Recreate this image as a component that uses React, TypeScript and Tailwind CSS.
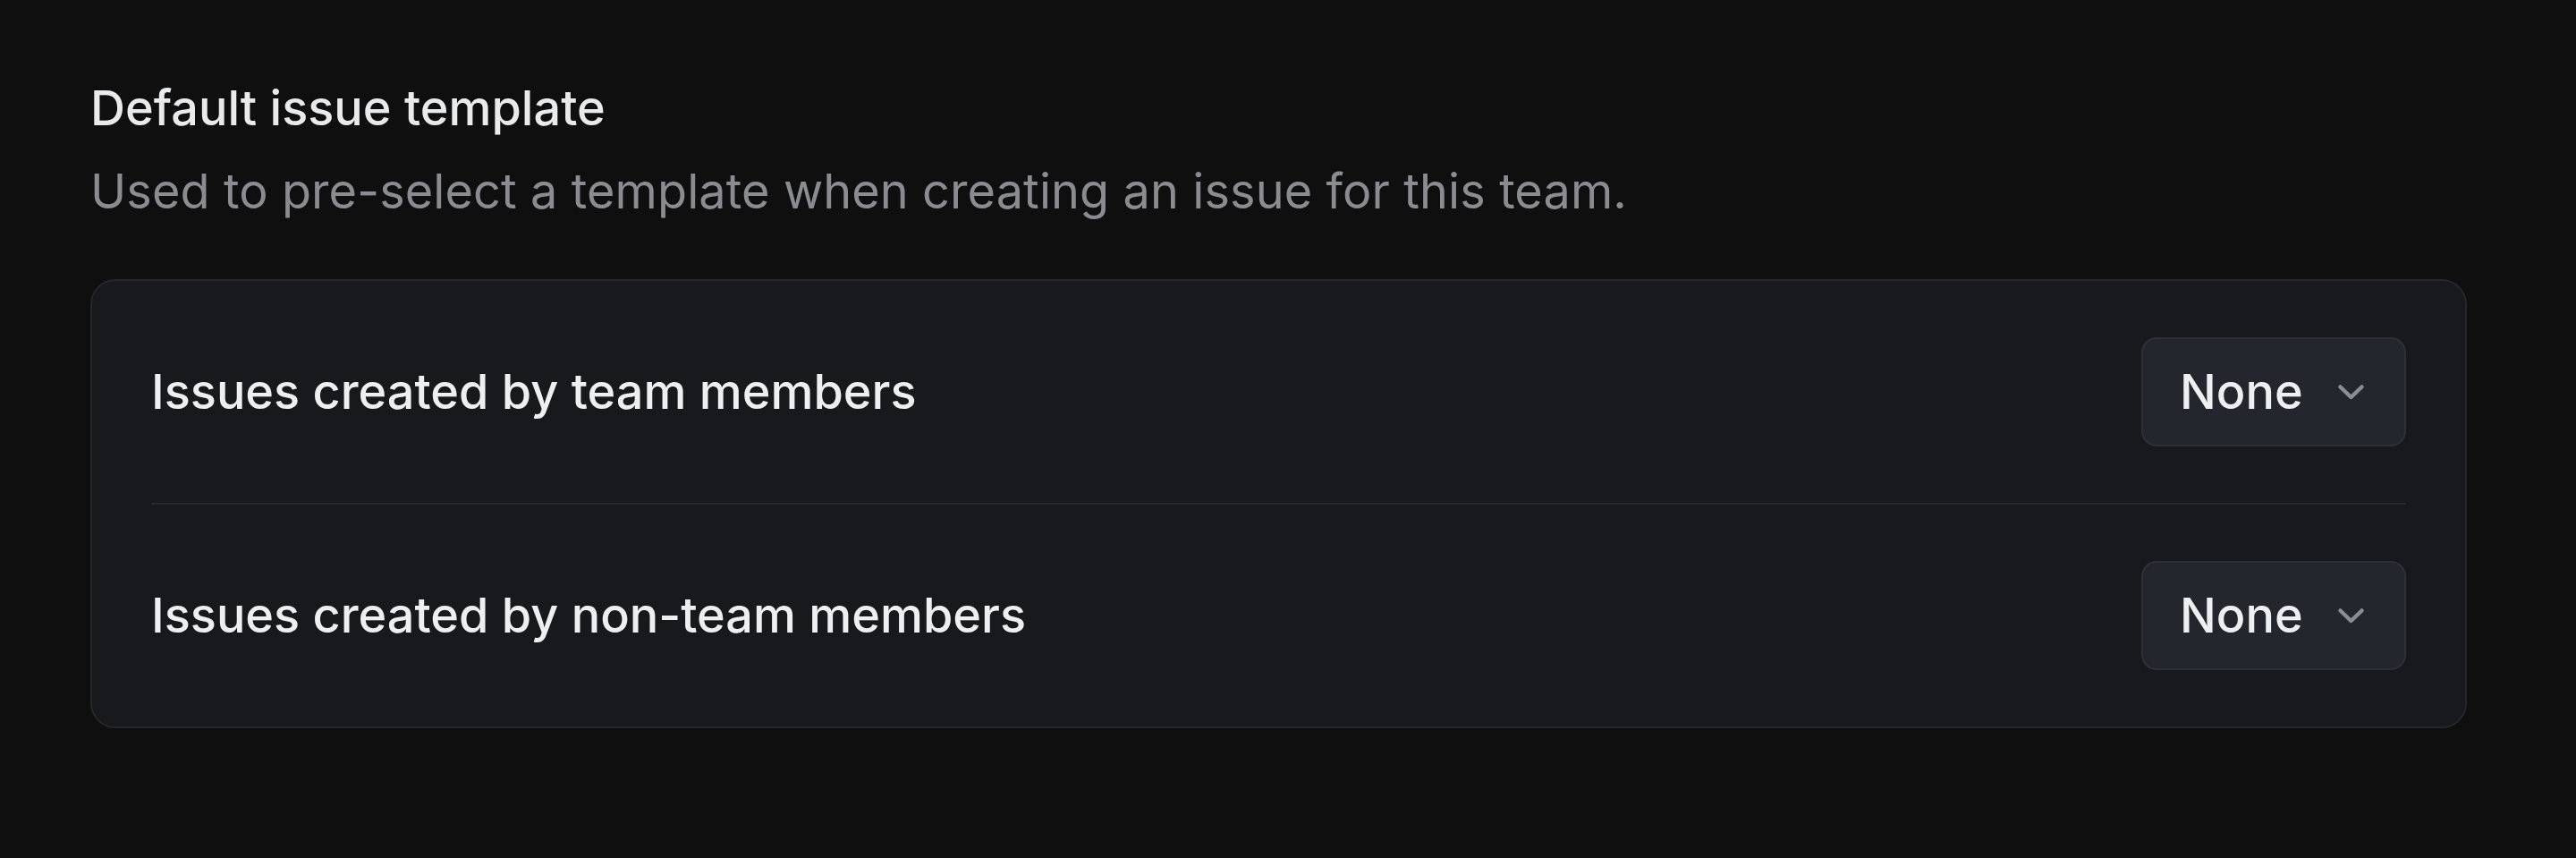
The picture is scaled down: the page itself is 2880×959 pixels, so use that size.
import React from "react";

function Chevron() {
  return (
    <svg width="31" height="19" viewBox="0 0 31 19" fill="none" className="shrink-0">
      <polyline
        points="3.5,3.5 15.5,15 27.5,3.5"
        stroke="#8b8d94"
        strokeWidth="4.5"
        strokeLinecap="round"
        strokeLinejoin="round"
      />
    </svg>
  );
}

function Select() {
  return (
    <button className="flex h-[122px] w-[296px] items-center justify-between rounded-[17px] border-2 border-[#2e3038] bg-[#24262e] pl-[41px] pr-[44px] text-[54px] font-medium leading-none text-[#eeeff1]">
      <span>None</span>
      <Chevron />
    </button>
  );
}

function Row({ label, last }: { label: string; last?: boolean }) {
  return (
    <div
      className={
        "flex items-center justify-between py-[63px] " +
        (last ? "" : "border-b-2 border-[#26272c]")
      }
    >
      <span className="text-[54px] font-medium leading-none text-[#eeeff1]">{label}</span>
      <Select />
    </div>
  );
}

export default function App() {
  return (
    <div
      className="min-h-[959px] w-full bg-[#0f0f10] pl-[101px] pt-[88px]"
      style={{ fontFamily: "Inter, 'Noto Sans', sans-serif" }}
    >
      <div className="w-[2657px]">
        <h2 className="text-[54px] font-medium leading-[66px] text-[#e9eaec]">Default issue template</h2>
        <p className="mt-[27px] text-[54px] leading-[66px] tracking-[0.1px] text-[#8a8c92]">
          Used to pre-select a template when creating an issue for this team.
        </p>
        <div className="mt-[65px] rounded-[28px] border-2 border-[#26272c] bg-[#18191c] px-[66px]">
          <Row label="Issues created by team members" />
          <Row label="Issues created by non-team members" last />
        </div>
      </div>
    </div>
  );
}
